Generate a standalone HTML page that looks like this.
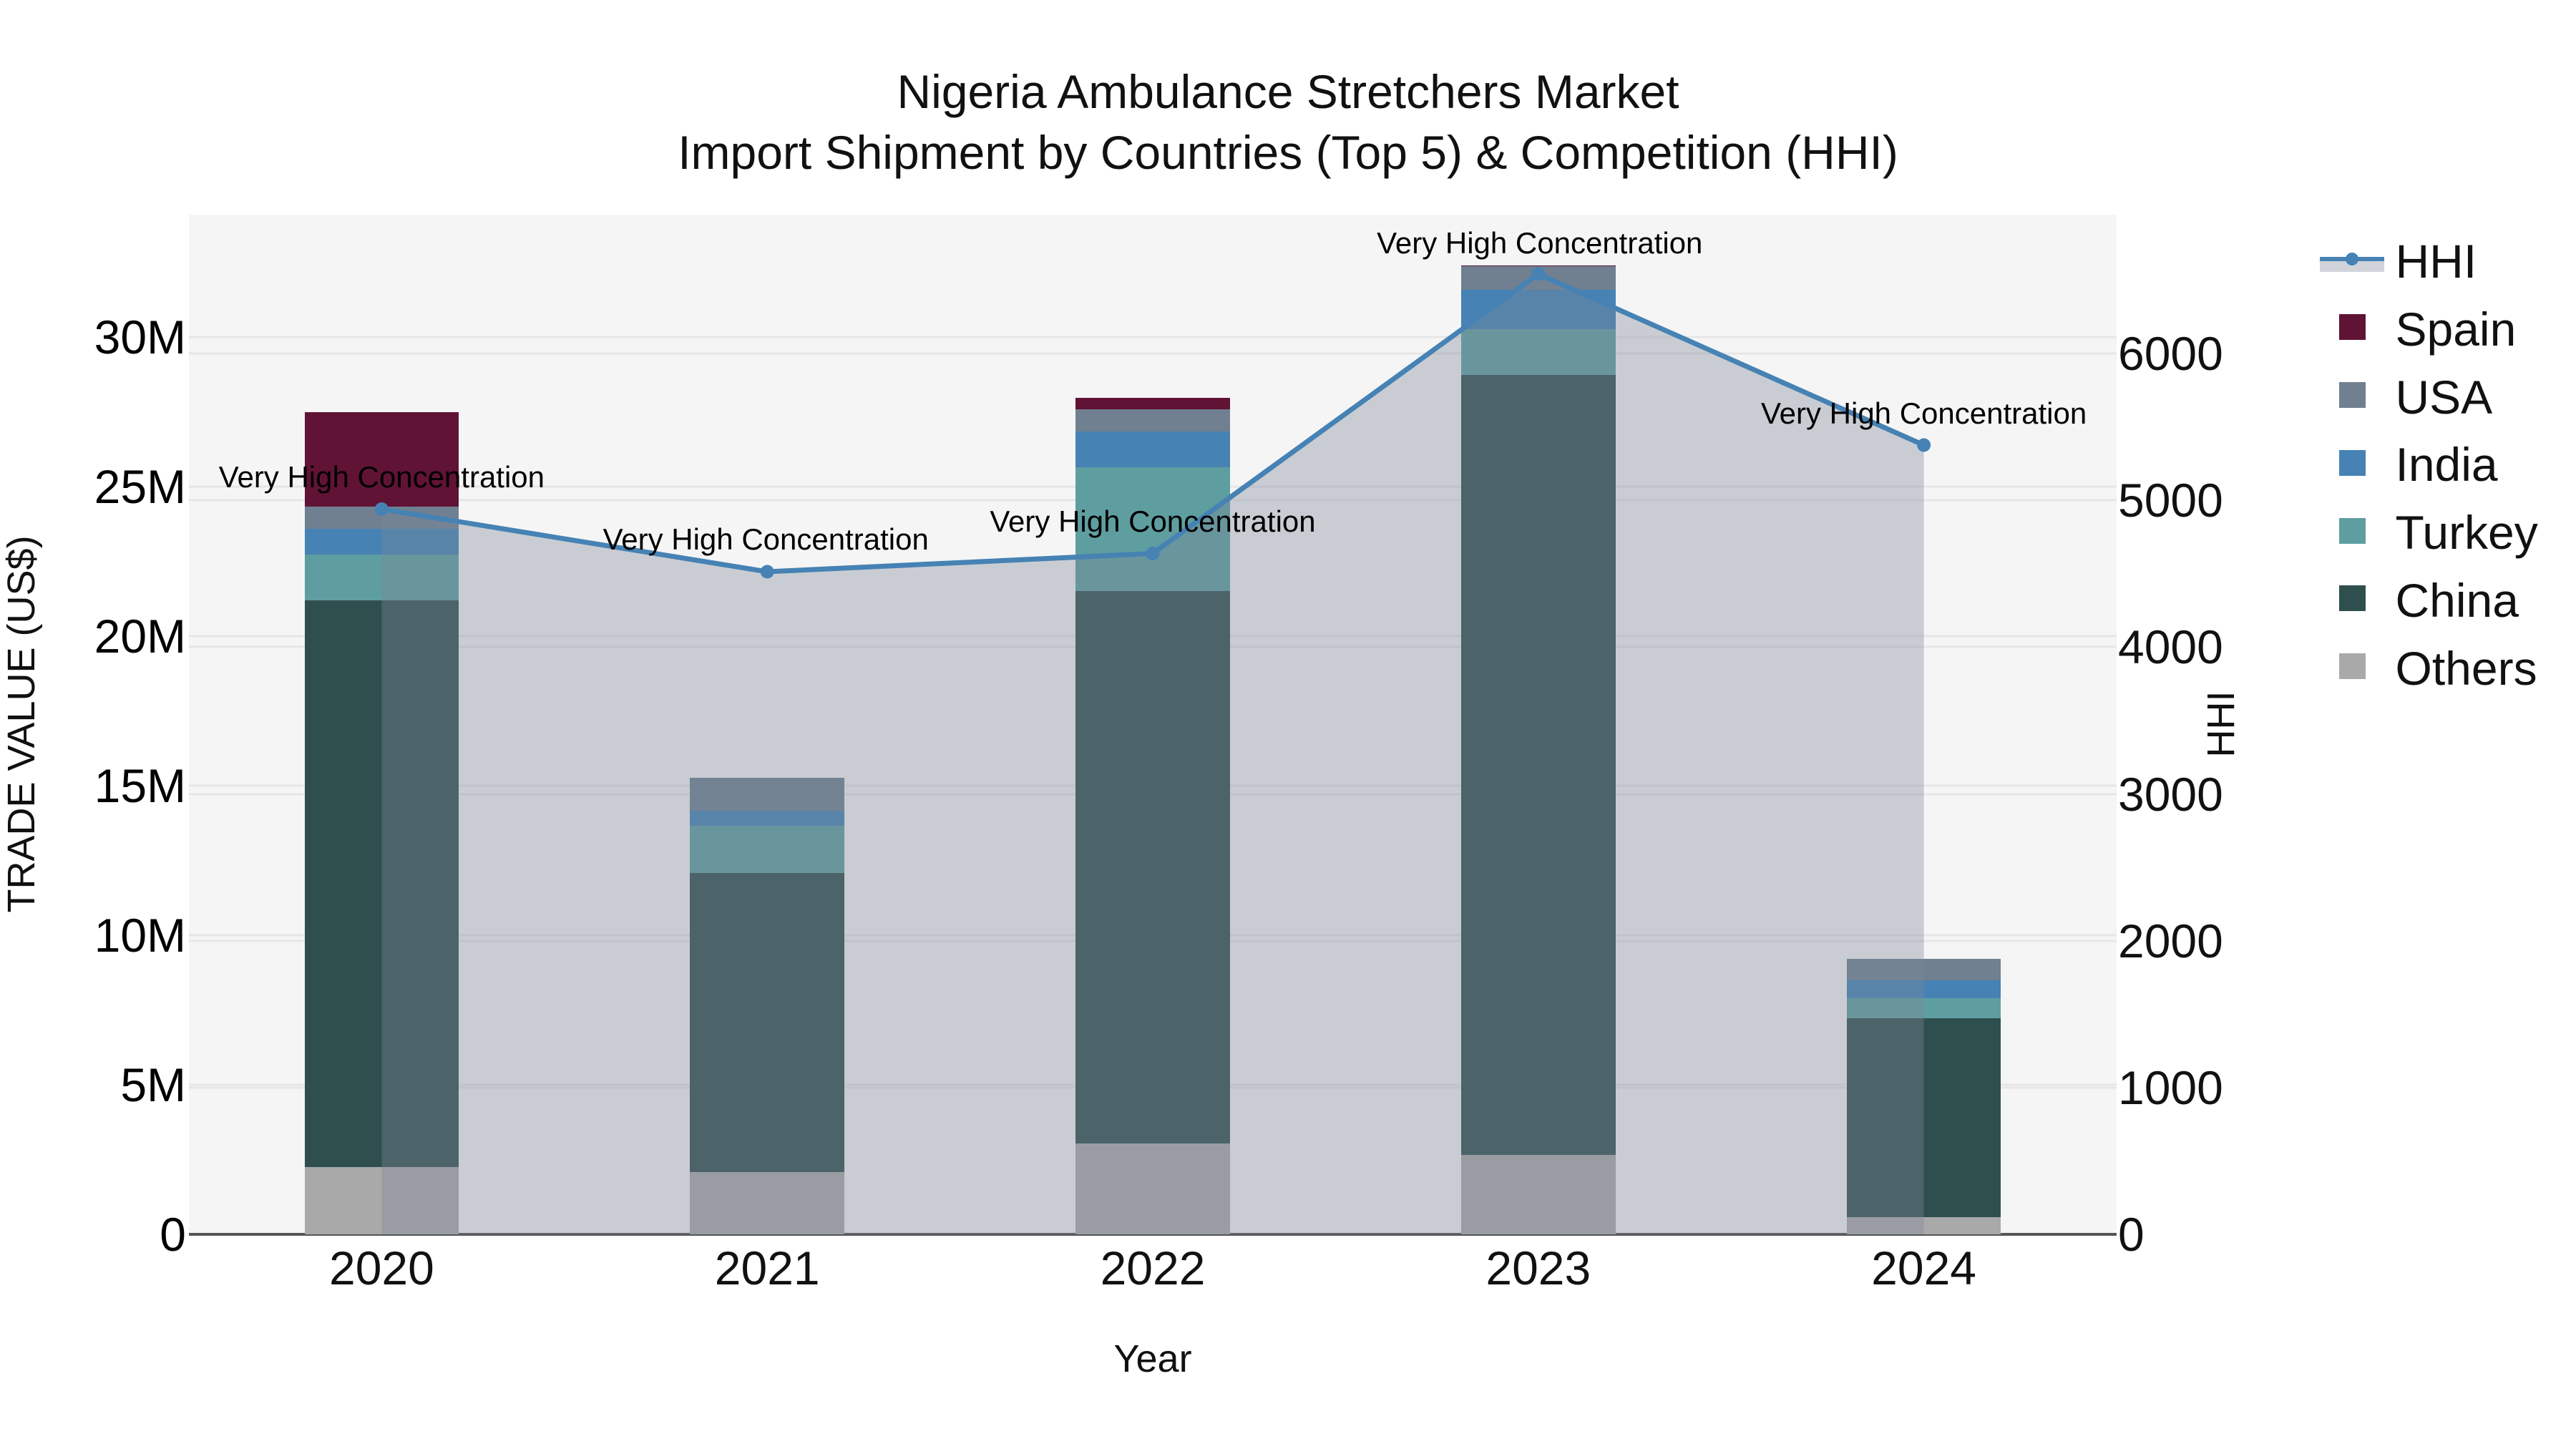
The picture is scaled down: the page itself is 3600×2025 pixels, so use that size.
<!DOCTYPE html>
<html><head><meta charset="utf-8"><style>
html,body{margin:0;padding:0;background:#fff;width:3600px;height:2025px;overflow:hidden}
svg{display:block;font-family:"Liberation Sans",Arial,sans-serif}
.t{font-size:66px;fill:#111}
.a{font-size:42px;fill:#000;text-anchor:middle}
.ti{font-size:54px;fill:#111}
.y{text-anchor:end;fill:#000}
.x{text-anchor:middle}
.g line{stroke:#e6e6e6;stroke-width:3}
</style></head><body>
<svg width="3600" height="2025" viewBox="0 0 3600 2025" xmlns="http://www.w3.org/2000/svg">
<rect width="3600" height="2025" fill="#fff"/>
<rect x="264" y="300" width="2694" height="1425" fill="#f5f5f5"/>
<g class="g">
<line x1="264" x2="2958" y1="1516" y2="1516"/><line x1="264" x2="2958" y1="1307" y2="1307"/><line x1="264" x2="2958" y1="1098" y2="1098"/><line x1="264" x2="2958" y1="889" y2="889"/><line x1="264" x2="2958" y1="680" y2="680"/><line x1="264" x2="2958" y1="471" y2="471"/>
<line x1="264" x2="2958" y1="1520" y2="1520"/><line x1="264" x2="2958" y1="1315" y2="1315"/><line x1="264" x2="2958" y1="1110" y2="1110"/><line x1="264" x2="2958" y1="904" y2="904"/><line x1="264" x2="2958" y1="699" y2="699"/><line x1="264" x2="2958" y1="494" y2="494"/>
</g>
<rect x="264" y="1723" width="2694" height="4" fill="#555"/>
<!-- 2020 -->
<g>
<rect x="426" y="1631" width="215" height="94" fill="#a9a9a9"/>
<rect x="426" y="839" width="215" height="792" fill="#2f4f4f"/>
<rect x="426" y="775" width="215" height="64" fill="#5f9ea0"/>
<rect x="426" y="739" width="215" height="36" fill="#4682b4"/>
<rect x="426" y="708" width="215" height="31" fill="#708090"/>
<rect x="426" y="576" width="215" height="132" fill="#601335"/>
</g>
<!-- 2021 -->
<g>
<rect x="964" y="1638" width="216" height="87" fill="#a9a9a9"/>
<rect x="964" y="1220" width="216" height="418" fill="#2f4f4f"/>
<rect x="964" y="1154" width="216" height="66" fill="#5f9ea0"/>
<rect x="964" y="1133" width="216" height="21" fill="#4682b4"/>
<rect x="964" y="1087" width="216" height="46" fill="#708090"/>
</g>
<!-- 2022 -->
<g>
<rect x="1503" y="1598" width="216" height="127" fill="#a9a9a9"/>
<rect x="1503" y="826" width="216" height="772" fill="#2f4f4f"/>
<rect x="1503" y="653" width="216" height="173" fill="#5f9ea0"/>
<rect x="1503" y="603" width="216" height="50" fill="#4682b4"/>
<rect x="1503" y="572" width="216" height="31" fill="#708090"/>
<rect x="1503" y="556" width="216" height="16" fill="#601335"/>
</g>
<!-- 2023 -->
<g>
<rect x="2042" y="1614" width="216" height="111" fill="#a9a9a9"/>
<rect x="2042" y="524" width="216" height="1090" fill="#2f4f4f"/>
<rect x="2042" y="460" width="216" height="64" fill="#5f9ea0"/>
<rect x="2042" y="405" width="216" height="55" fill="#4682b4"/>
<rect x="2042" y="372" width="216" height="33" fill="#708090"/>
<rect x="2042" y="371" width="216" height="1" fill="#601335"/>
</g>
<!-- 2024 -->
<g>
<rect x="2581" y="1701" width="215" height="24" fill="#a9a9a9"/>
<rect x="2581" y="1423" width="215" height="278" fill="#2f4f4f"/>
<rect x="2581" y="1395" width="215" height="28" fill="#5f9ea0"/>
<rect x="2581" y="1370" width="215" height="25" fill="#4682b4"/>
<rect x="2581" y="1340" width="215" height="30" fill="#708090"/>
</g>
<!-- HHI -->
<polygon points="533.4,711.5 1072.2,799 1611,773.5 2149.8,383 2688.6,622 2688.6,1725 533.4,1725" fill="rgb(124,135,153)" fill-opacity="0.36"/>
<polyline points="533.4,711.5 1072.2,799 1611,773.5 2149.8,383 2688.6,622" fill="none" stroke="#4682b4" stroke-width="7" stroke-linejoin="round"/>
<g fill="#4682b4">
<circle cx="533.4" cy="711.5" r="9.5"/><circle cx="1072.2" cy="799" r="9.5"/><circle cx="1611" cy="773.5" r="9.5"/><circle cx="2149.8" cy="383" r="9.5"/><circle cx="2688.6" cy="622" r="9.5"/>
</g>
<text class="a" x="533.4" y="681">Very High Concentration</text>
<text class="a" x="1070.2" y="768">Very High Concentration</text>
<text class="a" x="1611" y="743">Very High Concentration</text>
<text class="a" x="2151.8" y="354">Very High Concentration</text>
<text class="a" x="2688.6" y="592">Very High Concentration</text>
<!-- left ticks -->
<text class="t y" x="260" y="1748">0</text>
<text class="t y" x="260" y="1539">5M</text>
<text class="t y" x="260" y="1330">10M</text>
<text class="t y" x="260" y="1121">15M</text>
<text class="t y" x="260" y="912">20M</text>
<text class="t y" x="260" y="703">25M</text>
<text class="t y" x="260" y="494">30M</text>
<!-- right ticks -->
<text class="t" x="2960" y="1748">0</text>
<text class="t" x="2960" y="1543">1000</text>
<text class="t" x="2960" y="1338">2000</text>
<text class="t" x="2960" y="1133">3000</text>
<text class="t" x="2960" y="927">4000</text>
<text class="t" x="2960" y="722">5000</text>
<text class="t" x="2960" y="517">6000</text>
<!-- x ticks -->
<text class="t x" x="533.4" y="1795">2020</text>
<text class="t x" x="1072.2" y="1795">2021</text>
<text class="t x" x="1611" y="1795">2022</text>
<text class="t x" x="2149.8" y="1795">2023</text>
<text class="t x" x="2688.6" y="1795">2024</text>
<!-- titles -->
<text x="1800" y="151" text-anchor="middle" font-size="66" fill="#111">Nigeria Ambulance Stretchers Market</text>
<text x="1800" y="236" text-anchor="middle" font-size="66" fill="#111">Import Shipment by Countries (Top 5) &amp; Competition (HHI)</text>
<text class="ti" x="1611" y="1917" text-anchor="middle">Year</text>
<text class="ti" transform="translate(48,1012) rotate(-90)" text-anchor="middle">TRADE VALUE (US$)</text>
<text class="ti" transform="translate(3122,1012) rotate(-90)" text-anchor="middle">HHI</text>
<!-- legend -->
<rect x="3242" y="362" width="90" height="18" fill="rgb(124,135,153)" fill-opacity="0.36"/>
<line x1="3242" x2="3332" y1="362" y2="362" stroke="#4682b4" stroke-width="6"/>
<circle cx="3287" cy="362" r="9" fill="#4682b4"/>
<rect x="3269" y="439" width="37" height="36" fill="#601335"/>
<rect x="3269" y="534" width="37" height="36" fill="#708090"/>
<rect x="3269" y="629" width="37" height="36" fill="#4682b4"/>
<rect x="3269" y="724" width="37" height="36" fill="#5f9ea0"/>
<rect x="3269" y="818" width="37" height="36" fill="#2f4f4f"/>
<rect x="3269" y="913" width="37" height="36" fill="#a9a9a9"/>
<text class="t" x="3347.5" y="388">HHI</text>
<text class="t" x="3347.5" y="483">Spain</text>
<text class="t" x="3347.5" y="578">USA</text>
<text class="t" x="3347.5" y="672">India</text>
<text class="t" x="3347.5" y="767">Turkey</text>
<text class="t" x="3347.5" y="862">China</text>
<text class="t" x="3347.5" y="957">Others</text>
</svg>
</body></html>
